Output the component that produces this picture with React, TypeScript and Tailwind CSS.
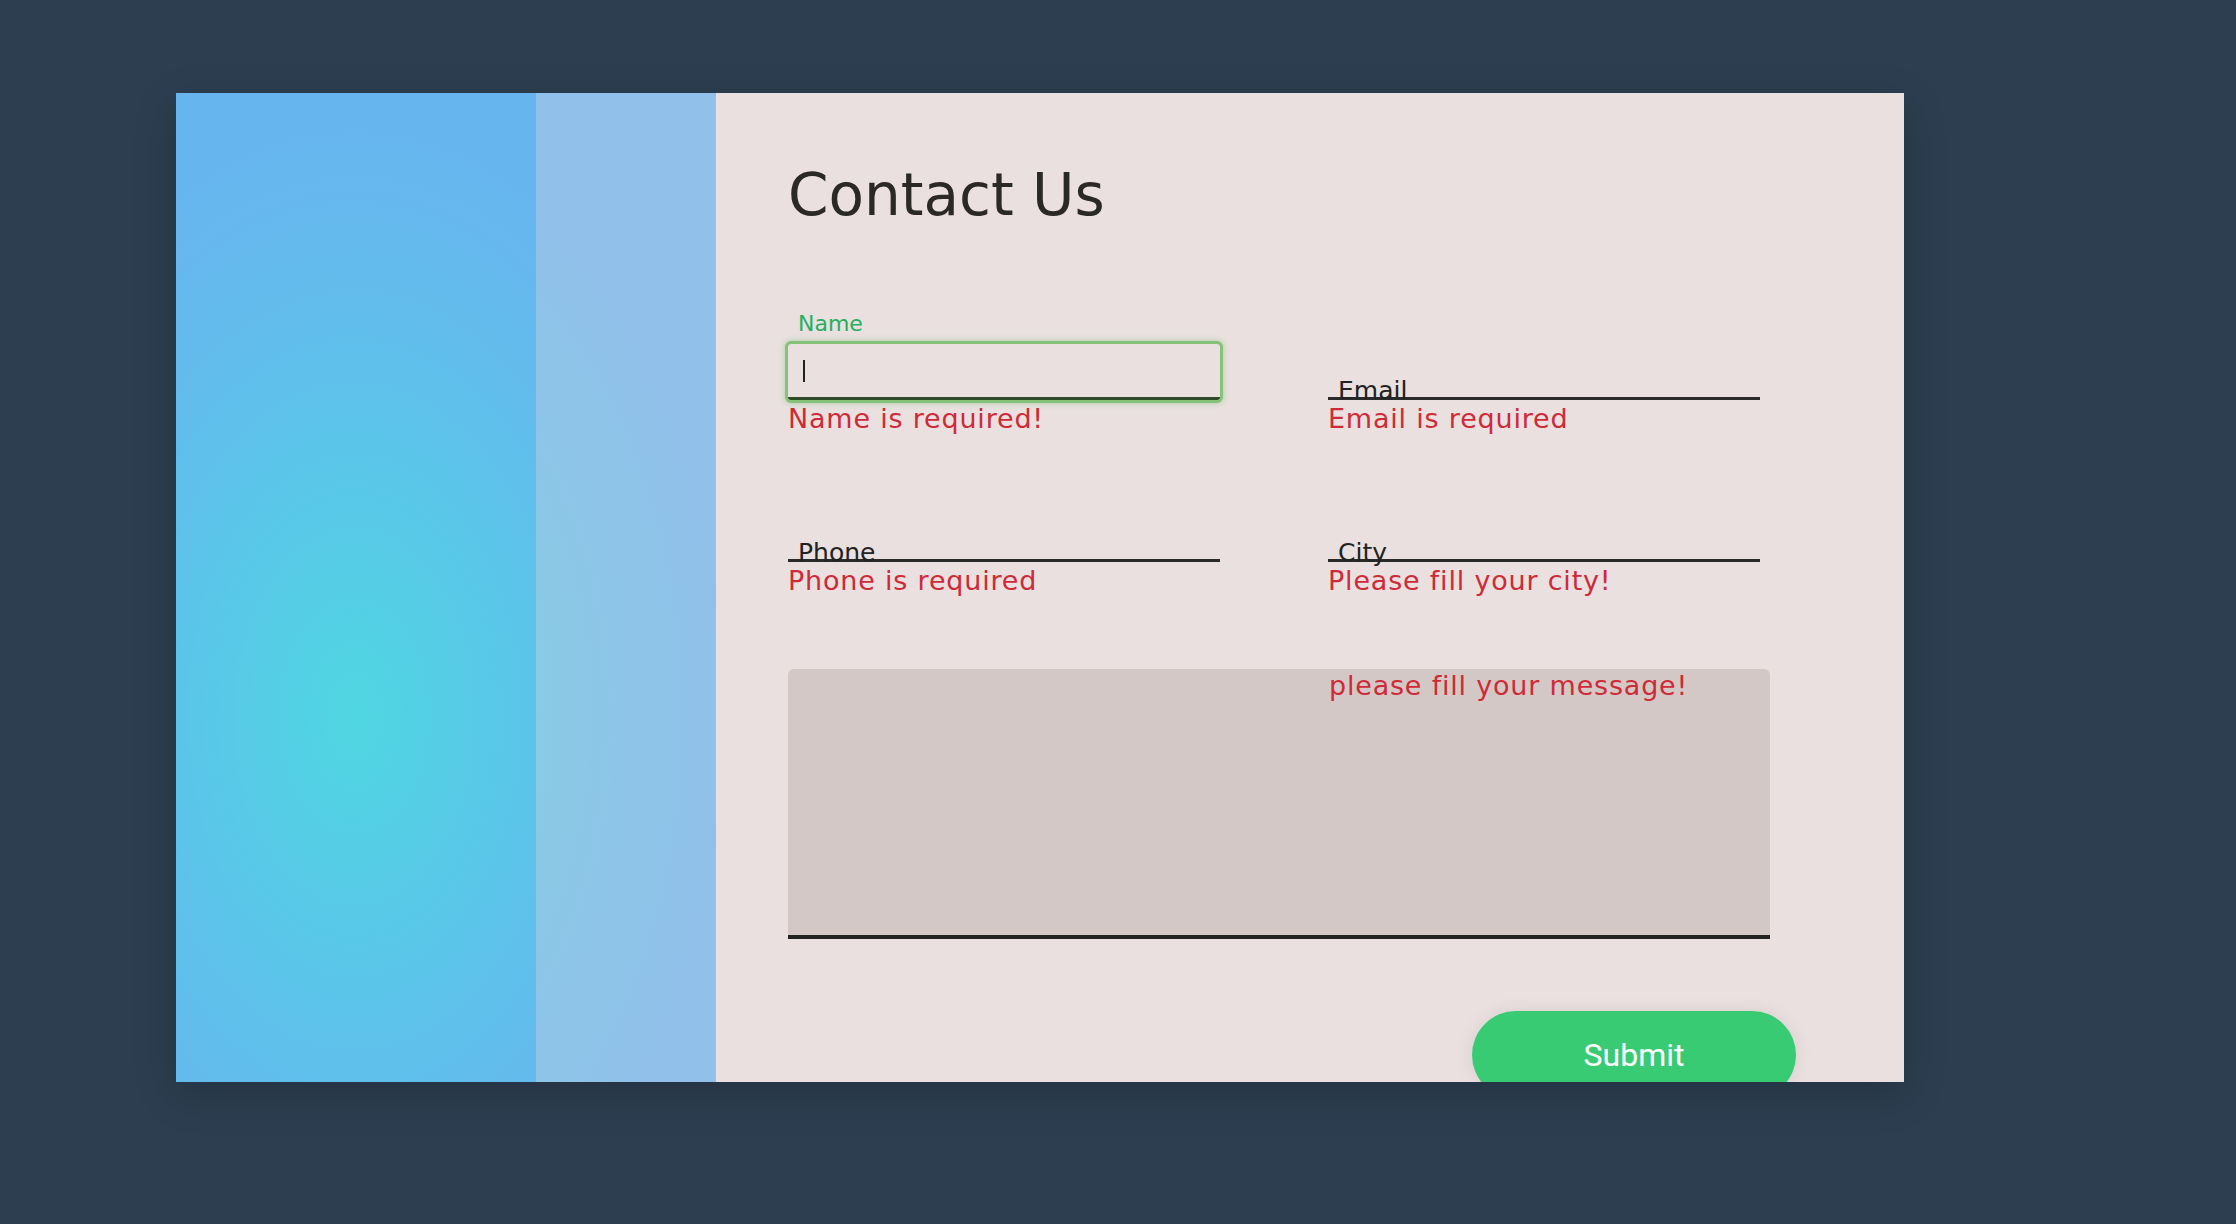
import React from "react";

const errorCls =
  "block mt-[3px] text-[27px] leading-[32px] tracking-[0.8px] text-[#cf2a38] font-['DejaVu_Sans',sans-serif]";

const labelCls =
  "absolute left-[10px] bottom-[-5px] text-[25px] leading-[28px] text-[#222] font-['DejaVu_Sans',sans-serif] pointer-events-none";

function LineField({ label, error }: { label: string; error: string }) {
  return (
    <div className="w-[432px]">
      <div className="relative h-[127px] flex flex-col justify-end">
        <input
          type="text"
          aria-label={label}
          className="w-full h-[40px] bg-transparent border-b-[3px] border-[#2a2a2a] outline-none"
        />
        <label className={labelCls}>{label}</label>
      </div>
      <span className={errorCls}>{error}</span>
    </div>
  );
}

export default function App() {
  return (
    <div className="min-h-screen bg-[#2c3e50] pt-[93px] pl-[176px]">
      <div className="flex w-[1728px] h-[989px] overflow-hidden shadow-[0_12px_40px_rgba(0,0,0,0.18)]">
        {/* side art */}
        <div className="flex w-[540px] bg-[radial-gradient(ellipse_70%_60%_at_33%_63%,#4fd6e1_0%,#58c9e8_35%,#62bcec_70%,#67b5ef_100%)]">
          <div className="w-[360px]" />
          <div className="w-[180px] bg-[#f2dbde]/30" />
        </div>

        {/* form */}
        <div className="flex-1 bg-[#e9e0df] pl-[72px] pt-[73px]">
          <h1 className="text-[58px] leading-[58px] text-[#2b2828] font-['DejaVu_Sans',sans-serif] font-normal">
            Contact Us
          </h1>

          <form className="mt-[85px]">
            <div className="flex gap-[108px]">
              {/* focused name field */}
              <div className="w-[432px]">
                <div className="relative h-[91px] flex flex-col justify-end">
                  <label className="absolute left-[10px] top-[3px] text-[22px] leading-[24px] text-[#27ae60] font-['DejaVu_Sans',sans-serif]">
                    Name
                  </label>
                  <div className="relative w-full h-[56px] rounded-[3px] border-b-[3px] border-[#2f4a2a] shadow-[0_0_0_3px_#86c27a,0_0_5px_4px_rgba(134,194,122,0.45)]">
                    <input
                      type="text"
                      aria-label="Name"
                      className="w-full h-full bg-transparent outline-none caret-transparent"
                    />
                    <span className="absolute left-[15px] top-[16px] w-[2px] h-[22px] bg-[#222]" />
                  </div>
                </div>
                <span className={errorCls}>Name is required!</span>
              </div>

              <div className="w-[432px]">
                <div className="relative h-[91px] flex flex-col justify-end">
                  <input
                    type="email"
                    aria-label="Email"
                    className="w-full h-[40px] bg-transparent border-b-[3px] border-[#2a2a2a] outline-none"
                  />
                  <label className={labelCls}>Email</label>
                </div>
                <span className={errorCls}>Email is required</span>
              </div>
            </div>

            <div className="flex gap-[108px]">
              <LineField label="Phone" error="Phone is required" />
              <LineField label="City" error="Please fill your city!" />
            </div>

            <div className="relative mt-[72px] w-[982px]">
              <textarea
                aria-label="Message"
                className="block w-full h-[270px] resize-none bg-[#d4c8c6] rounded-t-[6px] border-b-[4px] border-[#222] outline-none"
              />
              <span className="absolute left-[541px] top-[1px] text-[27px] leading-[32px] tracking-[0.8px] text-[#cf2a38] font-['DejaVu_Sans',sans-serif]">
                please fill your message!
              </span>
            </div>

            <div className="flex justify-end w-[1008px] mt-[72px]">
              <button
                type="submit"
                className="w-[324px] h-[88px] rounded-full bg-[#38cb73] text-white text-[32px] font-['Roboto',sans-serif] shadow-[0_0_18px_rgba(0,0,0,0.08)]"
              >
                Submit
              </button>
            </div>
          </form>
        </div>
      </div>
    </div>
  );
}
